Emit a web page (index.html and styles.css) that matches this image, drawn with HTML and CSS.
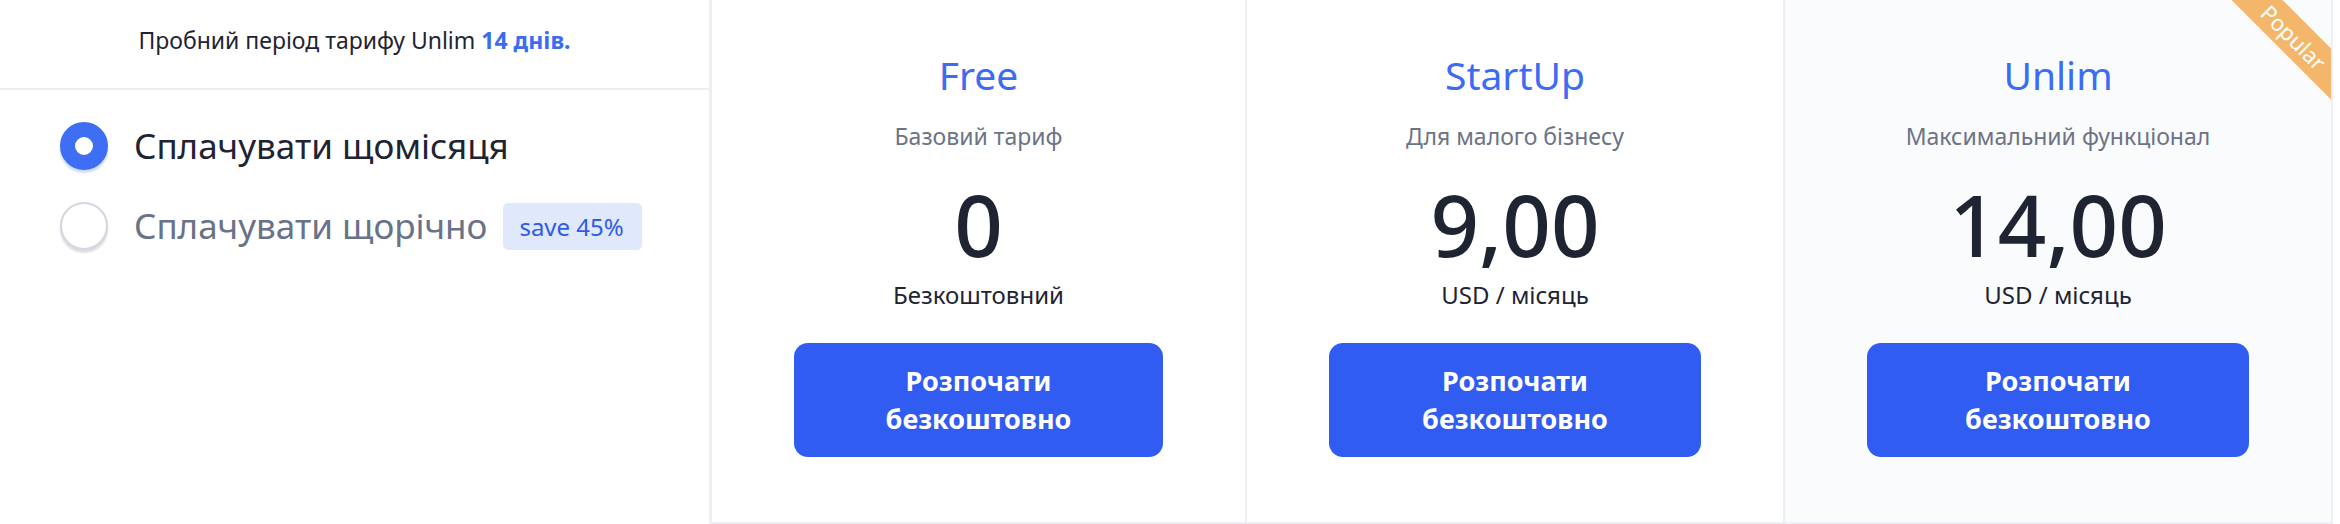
FILE: index.html
```html
<!DOCTYPE html>
<html lang="uk">
<head>
<meta charset="utf-8">
<title>Тарифи</title>
<link rel="stylesheet" href="styles.css">
</head>
<body>
<div class="pricing">
  <aside class="side">
    <div class="trial">Пробний період тарифу Unlim <b>14 днів.</b></div>
    <div class="options">
      <div class="opt opt-active">
        <span class="radio radio-on"></span>
        <span class="opt-label">Сплачувати щомісяця</span>
      </div>
      <div class="opt">
        <span class="radio"></span>
        <span class="opt-label opt-label-muted">Сплачувати щорічно</span>
        <span class="badge">save 45%</span>
      </div>
    </div>
  </aside>

  <section class="plan">
    <h2 class="plan-name">Free</h2>
    <p class="plan-desc">Базовий тариф</p>
    <div class="plan-price">0</div>
    <p class="plan-period">Безкоштовний</p>
    <a class="plan-btn">Розпочати безкоштовно</a>
  </section>

  <section class="plan">
    <h2 class="plan-name">StartUp</h2>
    <p class="plan-desc">Для малого бізнесу</p>
    <div class="plan-price">9,00</div>
    <p class="plan-period">USD / місяць</p>
    <a class="plan-btn">Розпочати безкоштовно</a>
  </section>

  <section class="plan plan-popular">
    <div class="ribbon">Popular</div>
    <h2 class="plan-name">Unlim</h2>
    <p class="plan-desc">Максимальний функціонал</p>
    <div class="plan-price">14,00</div>
    <p class="plan-period">USD / місяць</p>
    <a class="plan-btn">Розпочати безкоштовно</a>
  </section>
</div>
</body>
</html>
```

FILE: styles.css
```css
* { box-sizing: border-box; }

html, body {
  margin: 0;
  padding: 0;
  background: #ffffff;
}

body {
  font-family: "Noto Sans", "Open Sans", "DejaVu Sans", sans-serif;
  color: #1f2433;
}

.pricing {
  display: grid;
  grid-template-columns: 712px 535px 538px 548px;
  height: 524px;
}

/* Left side */
.side {
  border-right: 3px solid #edeff5;
  display: flex;
  flex-direction: column;
}

.trial {
  height: 90px;
  border-bottom: 2px solid #edeff5;
  padding-top: 25px;
  font-size: 23px;
  line-height: 30px;
  text-align: center;
  color: #1f2433;
}

.trial b {
  color: #3b6cf0;
  font-weight: 700;
}

.options {
  display: flex;
  flex-direction: column;
  gap: 32px;
  padding: 32px 0 0 60px;
}

.opt {
  display: flex;
  align-items: center;
  height: 48px;
}

.radio {
  width: 48px;
  height: 48px;
  flex: none;
  border-radius: 50%;
  background: #ffffff;
  border: 2px solid #d3d6de;
  box-shadow: 0 3px 2px rgba(60, 70, 90, 0.18);
}

.radio-on {
  border: 15px solid #3d6ef3;
  box-shadow: 0 3px 2px rgba(61, 110, 243, 0.25);
}

.opt-label {
  margin-left: 26px;
  font-size: 35px;
  line-height: 48px;
  color: #1f2433;
}

.opt-label-muted {
  color: #697287;
}

.badge {
  margin-left: 16px;
  height: 47px;
  padding: 0 18px 0 16px;
  border-radius: 5px;
  background: #e0e8fb;
  color: #2f5be6;
  font-size: 24px;
  line-height: 47px;
}

/* Plans */
.plan {
  position: relative;
  overflow: hidden;
  border-right: 2px solid #edeff5;
  border-bottom: 2px solid #edeff5;
  padding: 50px 82px 0;
  text-align: center;
}

.plan-popular {
  background: #fafbfd;
}

.plan-name {
  margin: 0;
  font-size: 39px;
  line-height: 50px;
  font-weight: 400;
  color: #3b6cf1;
}

.plan-desc {
  margin: 20px 0 0;
  font-size: 23px;
  line-height: 32px;
  color: #6b7385;
}

.plan-price {
  margin-top: 27px;
  font-size: 85px;
  line-height: 90px;
  font-weight: 500;
  color: #1f2433;
}

.plan-period {
  margin: 9px 0 0;
  font-size: 24px;
  line-height: 34px;
  color: #1f2433;
}

.plan-btn {
  display: block;
  margin-top: 31px;
  padding: 19px 50px;
  border-radius: 14px;
  background: #305cf1;
  color: #ffffff;
  font-size: 27px;
  line-height: 38px;
  font-weight: 700;
}

.ribbon {
  position: absolute;
  top: 19px;
  right: -63px;
  width: 200px;
  height: 36px;
  transform: rotate(45deg);
  background: #f3b66b;
  color: #ffffff;
  font-size: 22px;
  line-height: 36px;
  text-align: center;
}
```
